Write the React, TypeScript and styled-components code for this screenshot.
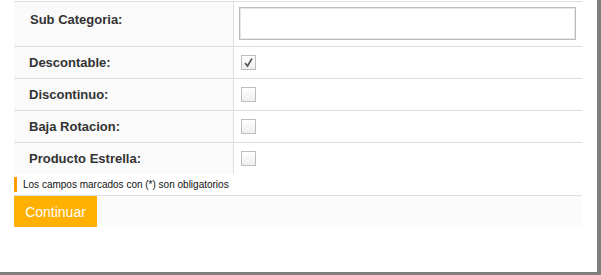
import React from 'react';
import styled, { createGlobalStyle } from 'styled-components';

const Global = createGlobalStyle`
    html, body {
        margin:0;
        padding:0;
        background:#7f7f7f;
        font-family:"Liberation Sans", Arial, sans-serif;
    }
`;

const Backdrop = styled.div`
    width:601px;
    height:275px;
    background:#7f7f7f;
    overflow:hidden;
`;

const Modal = styled.div`
    width:597px;
    height:272px;
    background:#fff;
    padding:1px 15px 0 14px;
    box-sizing:border-box;
`;

const Table = styled.div`
    display:grid;
    grid-template-columns:220px 1fr;
    border-top:1px solid #dedede;
`;

const Label = styled.div<{ $tall?: boolean; $last?: boolean }>`
    background:#fafafa;
    border-right:1px solid #dedede;
    border-bottom:${p => (p.$last ? 'none' : '1px solid #dedede')};
    height:${p => (p.$tall ? '44px' : '31px')};
    padding:${p => (p.$tall ? '10px 0 0 16px' : '0 0 0 15px')};
    box-sizing:content-box;
    display:flex;
    align-items:${p => (p.$tall ? 'flex-start' : 'center')};
    font-size:13px;
    font-weight:bold;
    color:#333;
    ${p => p.$tall && 'height:34px;'}
`;

const Value = styled.div<{ $tall?: boolean; $last?: boolean }>`
    border-bottom:${p => (p.$last ? 'none' : '1px solid #dedede')};
    height:${p => (p.$tall ? '44px' : '31px')};
    display:flex;
    align-items:center;
    padding-left:${p => (p.$tall ? '5px' : '7px')};
`;

const TextInput = styled.input`
    width:337px;
    height:33px;
    box-sizing:border-box;
    border:1px solid #bcbcbc;
    box-shadow:inset 0 0 0 1px #e6e6e6;
    margin-top:-1px;
    outline:none;
`;

const Box = styled.span`
    width:13px;
    height:13px;
    border:1px solid #bdbdbd;
    background:linear-gradient(#ffffff, #eeeeee);
    display:flex;
    align-items:center;
    justify-content:center;
    color:#444;
    font-size:12px;
    line-height:1;
`;

const Note = styled.div`
    margin-top:3px;
    height:15px;
    border-left:3px solid #ff9900;
    padding-left:6px;
    display:flex;
    align-items:center;
    font-size:10px;
    color:#111;
`;

const Footer = styled.div`
    margin-top:3px;
    border-top:1px solid #dedede;
    background:#fbfbfb;
    height:31px;
    display:flex;
`;

const Button = styled.button`
    width:83px;
    height:31px;
    border:none;
    background:#ffb000;
    color:#fff;
    font-family:"Liberation Sans", Arial, sans-serif;
    font-size:14px;
    padding:0;
    text-align:center;
    cursor:pointer;
`;

const Check = () => (
    <svg width="11" height="11" viewBox="0 0 11 11">
        <path d="M2 6 L4.5 9 L9 1.5" fill="none" stroke="#555" strokeWidth="1.6" />
    </svg>
);

const rows = [
    { label: 'Descontable:', checked: true },
    { label: 'Discontinuo:', checked: false },
    { label: 'Baja Rotacion:', checked: false },
    { label: 'Producto Estrella:', checked: false },
];

const App = () => {
    return (
        <>
            <Global />
            <Backdrop>
                <Modal>
                    <Table>
                        <Label $tall>Sub Categoria:</Label>
                        <Value $tall>
                            <TextInput type="text" />
                        </Value>
                        {rows.map((r, i) => {
                            const last = i === rows.length - 1;
                            return (
                                <React.Fragment key={r.label}>
                                    <Label $last={last}>{r.label}</Label>
                                    <Value $last={last}>
                                        <Box>{r.checked && <Check />}</Box>
                                    </Value>
                                </React.Fragment>
                            );
                        })}
                    </Table>
                    <Note>Los campos marcados con (*) son obligatorios</Note>
                    <Footer>
                        <Button>Continuar</Button>
                    </Footer>
                </Modal>
            </Backdrop>
        </>
    );
};

export default App;
